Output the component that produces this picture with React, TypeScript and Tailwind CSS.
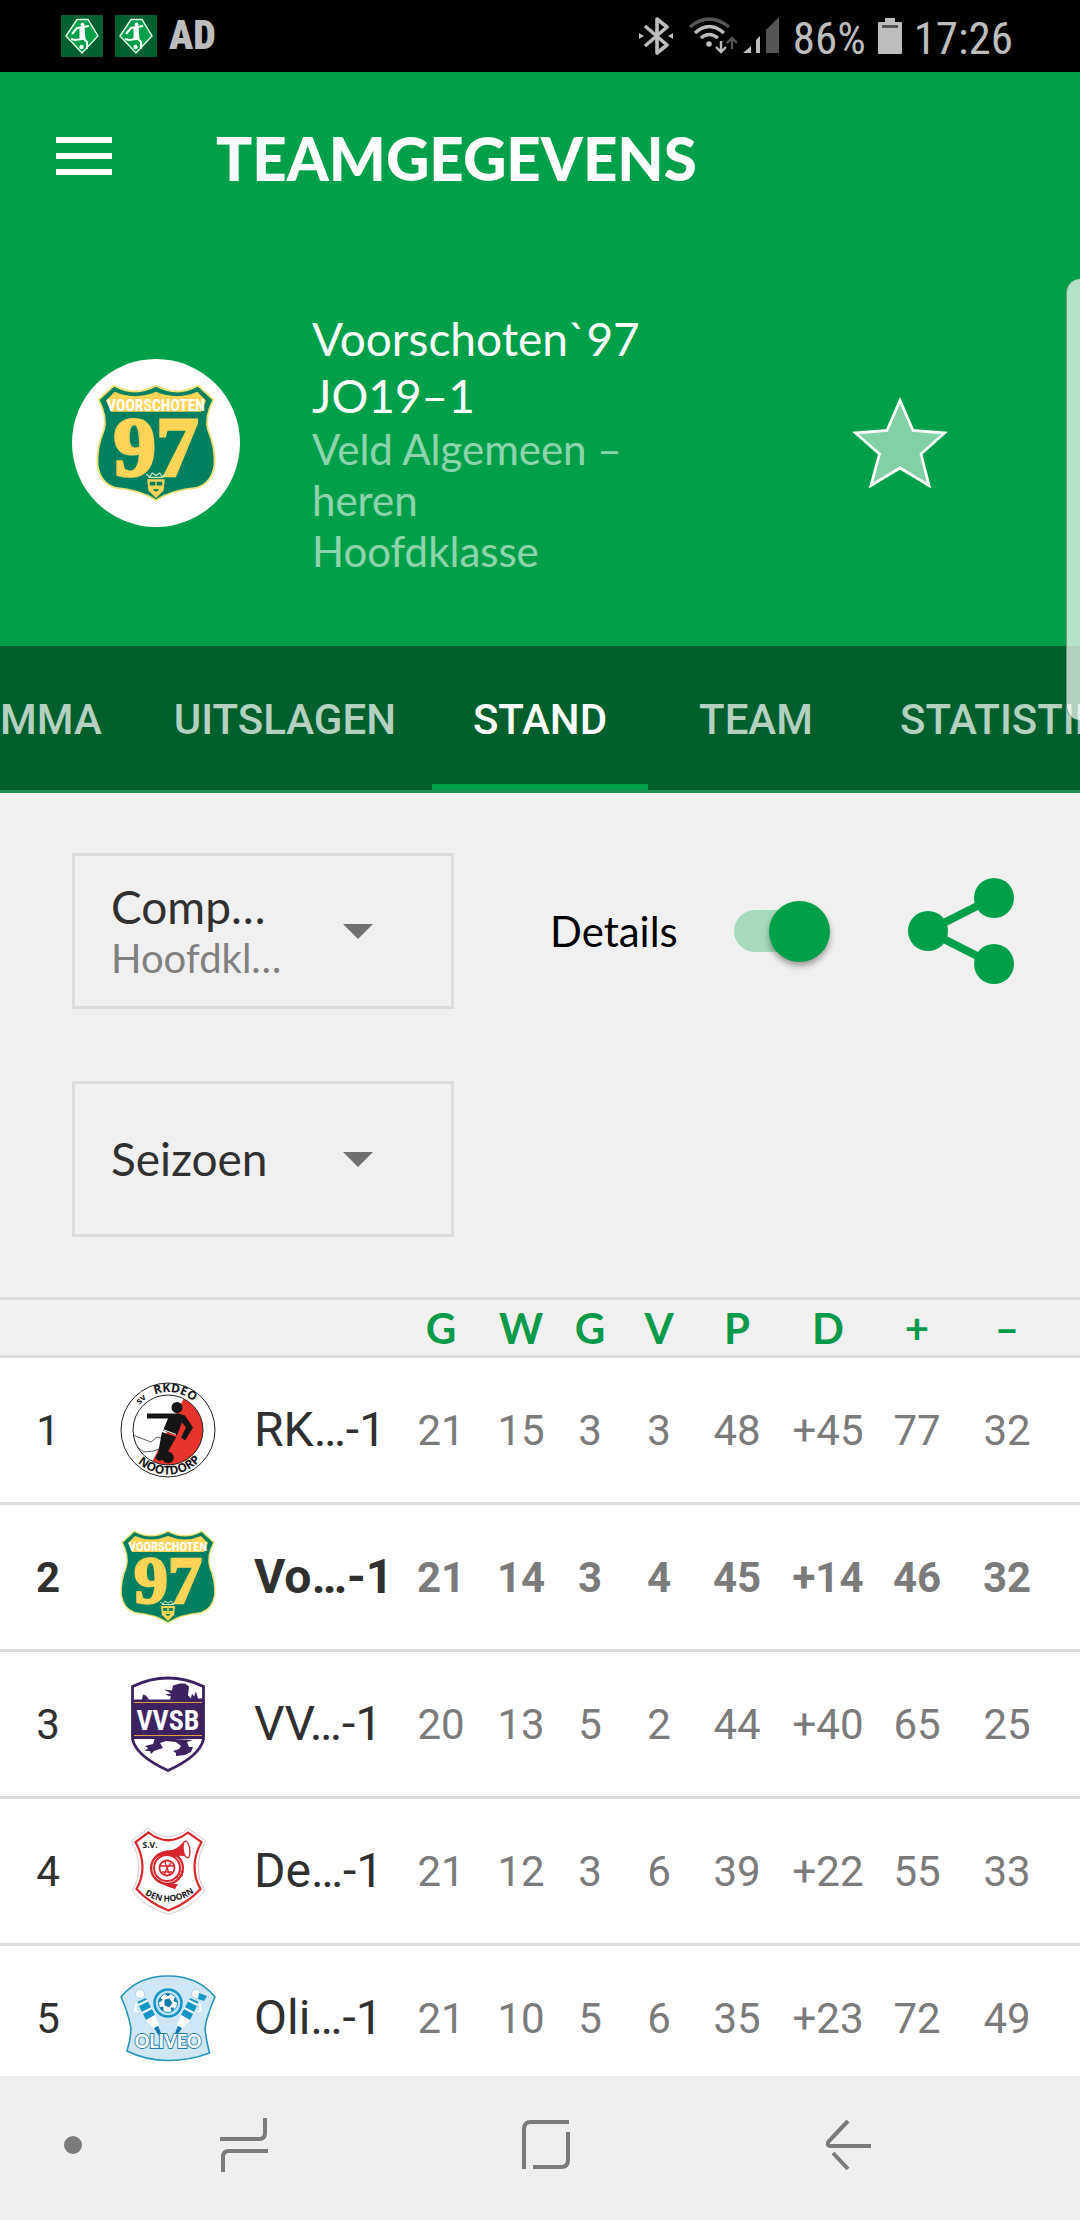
import { useLayoutEffect, useRef, useState } from 'react'
import type { ReactNode } from 'react'
import clsx from 'clsx'

const TABS = ['PROGRAMMA', 'UITSLAGEN', 'STAND', 'TEAM', 'STATISTIEKEN']

const COLUMNS = [
  { label: 'G', title: 'Gespeeld', width: 'w-[74px]' },
  { label: 'W', title: 'Winst', width: 'w-[86px]' },
  { label: 'G', title: 'Gelijk', width: 'w-[52px]' },
  { label: 'V', title: 'Verlies', width: 'w-[86px]' },
  { label: 'P', title: 'Punten', width: 'w-[70px]' },
  { label: 'D', title: 'Doelsaldo', width: 'w-[112px]' },
  { label: '+', title: 'Voor', width: 'w-[66px]' },
  { label: '–', title: 'Tegen', width: 'w-[114px]' },
]

type Row = { pos: number; team: string; crest: ReactNode; stats: string[]; own?: boolean }

const ROWS: Row[] = [
  { pos: 1, team: 'RK…-1', crest: <RkdeoCrest />, stats: ['21', '15', '3', '3', '48', '+45', '77', '32'] },
  { pos: 2, team: 'Vo…-1', crest: <VoorschotenCrest />, stats: ['21', '14', '3', '4', '45', '+14', '46', '32'], own: true },
  { pos: 3, team: 'VV…-1', crest: <VvsbCrest />, stats: ['20', '13', '5', '2', '44', '+40', '65', '25'] },
  { pos: 4, team: 'De…-1', crest: <DenHoornCrest />, stats: ['21', '12', '3', '6', '39', '+22', '55', '33'] },
  { pos: 5, team: 'Oli…-1', crest: <OliveoCrest />, stats: ['21', '10', '5', '6', '35', '+23', '72', '49'] },
]

/* ---------- Club crests, all on a 96 x 96 grid ---------- */

function RkdeoCrest() {
  return (
    <svg viewBox="0 0 96 96" className="size-full" aria-hidden="true">
      <defs>
        <path id="rkdeo-top" d="M10 48a38 38 0 0 1 76 0" />
        <path id="rkdeo-bottom" d="M3.500 48a44.500 44.500 0 0 0 89 0" />
        <clipPath id="rkdeo-disc"><circle cx="48" cy="48" r="35" /></clipPath>
      </defs>
      <circle cx="48" cy="48" r="47" fill="#fff" stroke="#222" strokeWidth="1" />
      <path d="M65 14L32 80l20 10 40-10V20z" fill="#e8332c" clipPath="url(#rkdeo-disc)" />
      <path d="M13 53l10 4 8 3 6-5 7 2 12-2-3 5-11 6-8 3-10 1-8-6z" fill="#fff" stroke="#333" strokeWidth=".8" clipPath="url(#rkdeo-disc)" />
      <circle cx="48" cy="48" r="35" fill="none" stroke="#222" strokeWidth="1" />
      <circle cx="57" cy="25.500" r="5.500" fill="#151515" />
      <path d="M27 31.500h31l7 2 8 12-8 13-4-3 5-10-4-5-5 13-14-5 5-12H27z" fill="#151515" />
      <path d="M42 50l14 5-7 13-4 9-6 2-4-3 3-5z" fill="#151515" />
      <path d="M43 47.500l13 5" stroke="#fff" strokeWidth="1" />
      <circle cx="48" cy="75.500" r="5.800" fill="#151515" />
      <g fill="#151515" fontFamily="'Open Sans', sans-serif" fontWeight="700">
        <text fontSize="9"><textPath href="#rkdeo-top" startOffset="23%">sv</textPath></text>
        <text fontSize="12"><textPath href="#rkdeo-top" startOffset="56%" textAnchor="middle">RKDEO</textPath></text>
        <text fontSize="12"><textPath href="#rkdeo-bottom" startOffset="51%" textAnchor="middle">NOOTDORP</textPath></text>
      </g>
    </svg>
  )
}

function VoorschotenCrest() {
  const shield = 'M14.500 3Q31 12 48 3Q65 12 81.500 3L93 13.500Q86 27 89 38Q95 52 94 66Q92 79 81 83Q60 85 48 93Q36 85 15 83Q4 79 2 66Q1 52 7 38Q10 27 3 13.500Z'
  return (
    <svg viewBox="0 0 96 96" className="size-full" aria-hidden="true">
      <path d={shield} fill="#00805f" stroke="#f0e07a" strokeWidth="3" strokeLinejoin="round" />
      <path d={shield} fill="#00805f" />
      <path d="M15 7Q31 14 48 7Q65 14 81 7L88 14L84 23H12L8 14Z" fill="#ffd457" />
      <text x="48" y="22" textAnchor="middle" fontFamily="'Roboto Condensed', Roboto, sans-serif" fontWeight="700" fontSize="12.500" fill="#fff">VOORSCHOTEN</text>
      <text x="48" y="74" textAnchor="middle" fontFamily="'Liberation Serif', serif" fontWeight="700" fontSize="68" fill="#ffd457" stroke="#ffd457" strokeWidth="2.500">97</text>
      <path d="M41 77h14l-1 9-6 6-6-6z" fill="#ffd457" />
      <path d="M40 73l3 2 2-3 3 2 3-2 2 3 3-2M42 75.500h12" fill="none" stroke="#cfe8c0" strokeWidth="1" />
      <path d="M43.500 79.500h3.500v2h-3.500zM49 79.500h3.500v2H49zM46 85q2 3 4 0" fill="#00805f" stroke="#00805f" strokeWidth="1" />
    </svg>
  )
}

function VvsbCrest() {
  return (
    <svg viewBox="0 0 96 96" className="size-full" aria-hidden="true">
      <path d="M12.500 10.500Q30 2 48 2T83.500 10.500V63Q80 80 48 94.500Q16 80 12.500 63Z" fill="#fff" stroke="#3c2260" strokeWidth="2.800" />
      <path d="M13 23.500h9l1-5 3 1 3 4h21l1-3-6-2 6-1-7-4 8 1 1-5 7-2h5l4 3-1 9 3 3 1-5 2 3 2-5 2 7h6V63H13z" fill="#3c2260" />
      <path d="M35 62l-2 6-8 2 3 2-3 3 5 0 1 3 3-3 9-3-3-5 6-2 10 1 5 4-2 3-6 2 3 2 0 3 9-1 6-3 2-5-4 0-2-5 6-2z" fill="#3c2260" />
      <path d="M14 26.500h68M14 59.500h68" stroke="#e0a03c" strokeWidth="1.200" />
      <text x="48" y="53.500" textAnchor="middle" fontFamily="'Roboto Condensed', Roboto, sans-serif" fontWeight="700" fontSize="28" fill="#fff">VVSB</text>
    </svg>
  )
}

function DenHoornCrest() {
  return (
    <svg viewBox="0 0 96 96" className="size-full" aria-hidden="true">
      <defs><path id="den-hoorn-curve" d="M20 68Q48 90 79 66" /></defs>
      <path d="M28 5.500Q48 22 68.500 5.500L85.500 18Q71 44 84.500 68Q73 84 48.500 91.500Q24 84 12.500 68Q26 44 11.500 18Z" fill="#fff" stroke="#c9b8b8" strokeWidth=".8" />
      <path d="M28.500 9.500Q48 25 68 9.500L81.500 19Q68 44 80.500 66Q68 80 48.500 87.500Q29 80 16.500 66Q29 44 15.500 19Z" fill="#fff" stroke="#d8262c" strokeWidth="2.200" />
      <circle cx="47" cy="45" r="14.500" fill="none" stroke="#d8262c" strokeWidth="5" />
      <circle cx="47" cy="45" r="14.500" fill="none" stroke="#fff" strokeWidth=".8" />
      <circle cx="47" cy="45" r="7.500" fill="#fff" stroke="#d8262c" strokeWidth="1.800" />
      <path d="M41 43h12M42 49h10M45 39l2 6 3 7M51 40l-4 5-3 7" stroke="#d8262c" strokeWidth="1.300" fill="none" />
      <path d="M34 36Q40 27 52 27Q59 25 64 18L68 35Q62 31 55 34L50 33Q41 31 34 36Z" fill="#d8262c" />
      <ellipse cx="66.500" cy="26.500" rx="3.300" ry="8.500" transform="rotate(-8 66.500 26.500)" fill="#fff" stroke="#d8262c" strokeWidth="1.300" />
      <path d="M35 54Q42 62 58 61l-3 5Q42 63 35 54z" fill="#d8262c" />
      <path d="M60 48l4 1M59 51l4 2M57 54l3 2" stroke="#d8262c" strokeWidth="1" />
      <g fill="#151515" fontFamily="'Open Sans', sans-serif" fontWeight="700">
        <text x="22.500" y="24.500" fontSize="8.500">S.V.</text>
        <text fontSize="8.500"><textPath href="#den-hoorn-curve" startOffset="50%" textAnchor="middle">DEN HOORN</textPath></text>
      </g>
    </svg>
  )
}

function OliveoPlayer() {
  return (
    <>
      <circle cx="20" cy="24" r="4.500" fill="#fff" stroke="#8cc8e2" strokeWidth=".6" />
      <path d="M17 32l9-4 9 17-9 5z" fill="#1796c8" />
      <path d="M18.500 35l9-4.500M22 43l10-5" stroke="#fff" strokeWidth="2" />
      <path d="M26 50l9-5 4 10-5 4z" fill="#fff" />
      <path d="M34 58l4-2 5 12-2 1z" fill="#1478ac" />
      <path d="M17 32l-2 8 3 2" fill="none" stroke="#fff" strokeWidth="2" />
    </>
  )
}

function OliveoCrest() {
  return (
    <svg viewBox="0 0 96 96" className="size-full" aria-hidden="true">
      <path d="M1 27Q18 6 48 6T95 27Q87 45 85 58Q86 70 89.500 83Q70 90.500 48 90.500T7 81Q11 68 11 58Q8 42 1 27Z" fill="#cfe6f5" stroke="#2496bd" strokeWidth="1.600" />
      <OliveoPlayer />
      <g transform="matrix(-1 0 0 1 96 0)"><OliveoPlayer /></g>
      <path d="M79 23l8 3-3 5-6-2z" fill="#1796c8" />
      <circle cx="48" cy="33" r="13.500" fill="#bfe2f4" stroke="#1796c8" strokeWidth="2.500" />
      <circle cx="48" cy="33" r="9.500" fill="#fff" stroke="#1796c8" strokeWidth="1" />
      <path d="M45 30l4-1 3 4-3 4-4-2zM46 24h4l-2 2zM55 28l2 4-3-1zM54 38l-2 3-1-3zM43 41l-3-3 3-1zM39 32l1-4 2 2z" fill="#1478ac" stroke="#1478ac" strokeWidth="1" />
      <text x="48" y="78" textAnchor="middle" fontFamily="'Lato', sans-serif" fontWeight="900" fontSize="18" fill="#fff" stroke="#1a7dab" strokeWidth="1.800" paintOrder="stroke">OLIVEO</text>
    </svg>
  )
}

/* ---------- Status bar ---------- */

function KnvbBadge() {
  return (
    <svg viewBox="0 0 42 42" className="size-[42px]" aria-hidden="true">
      <path d="M0 0h42v42H0z" fill="#00602f" />
      <path d="M16 4.500h11L37 21 21 38 5 21z" fill="#009f4a" stroke="#e8fff0" strokeWidth="1.400" />
      <circle cx="21.500" cy="9.500" r="2" fill="#fff" />
      <path d="M28 11l-6 1-6 1-5 6M21 13l1 11-8 1-4-1M22 23l4 4v7" fill="none" stroke="#fff" strokeWidth="2" />
      <path d="M18.500 12h5l1 12h-6z" fill="#fff" />
      <circle cx="20.500" cy="32" r="2.200" fill="#fff" />
    </svg>
  )
}

function StatusBar() {
  return (
    <div className="flex h-[72px] shrink-0 items-center bg-black pr-[67px] pl-[61px] font-['Roboto_Condensed',Roboto,sans-serif] text-[#bdbdbd]">
      <div className="flex items-center gap-3">
        <KnvbBadge />
        <KnvbBadge />
        <span className="text-[40px] leading-none font-black">AD</span>
      </div>
      <div className="ml-auto flex items-center">
        <svg viewBox="0 0 34 38" className="h-[38px] w-[34px]" fill="none" stroke="currentColor" strokeWidth="3.600" aria-hidden="true">
          <path d="M6 9l22 19-10 8V2l10 8L6 29" strokeLinejoin="round" />
          <path d="M0 16l5 3-5 3zM34 16l-5 3 5 3z" fill="currentColor" stroke="none" />
        </svg>
        <svg viewBox="0 0 48 38" className="ml-4 h-[38px] w-12" fill="none" stroke="currentColor" strokeWidth="3.200" aria-hidden="true">
          <path d="M1 10Q20-6 40 10" stroke="#555" />
          <path d="M6 16Q20 3 35 16M12 21Q20 14 29 21" />
          <circle cx="20" cy="27" r="2.800" fill="currentColor" stroke="none" />
          <path d="M32 24v10M27 30l5 5 5-5" strokeWidth="2.400" />
          <path d="M43 32V22M38 26l5-5 5 5" stroke="#555" strokeWidth="2.400" />
        </svg>
        <svg viewBox="0 0 36 38" className="ml-1.5 h-[38px] w-9" fill="currentColor" aria-hidden="true">
          <path d="M0 36l8-7v7zM13 23l4-4v17h-4z" />
          <path d="M23 13L36 0v36H23z" fill="#555" />
        </svg>
        <span className="ml-3.5 pt-1 text-[45px] leading-none">86%</span>
        <svg viewBox="0 0 24 36" className="mx-3 h-9 w-6" fill="currentColor" aria-hidden="true">
          <path d="M7 0h10v4h6q1 0 1 1v30q0 1-1 1H1q-1 0-1-1V5q0-1 1-1h6z" />
          <path d="M4 7h16v3H4z" fill="#555" />
        </svg>
        <span className="pt-1 text-[45px] leading-none">17:26</span>
      </div>
    </div>
  )
}

/* ---------- Header ---------- */

function TeamHeader() {
  return (
    <header className="shrink-0 bg-[#009f4a] text-white">
      <div className="flex h-[168px] items-center pl-14">
        <button aria-label="Menu" className="flex flex-col gap-2.5">
          <span className="h-1.5 w-14 bg-white" />
          <span className="h-1.5 w-14 bg-white" />
          <span className="h-1.5 w-14 bg-white" />
        </button>
        <h1 className="ml-[104px] pt-1 text-[60px] leading-none font-black">TEAMGEGEVENS</h1>
      </div>
      <div className="flex h-[406px] items-center px-[72px] pr-[132px]">
        <div className="flex size-[168px] items-center justify-center rounded-full bg-white">
          <div className="size-[120px]"><VoorschotenCrest /></div>
        </div>
        <div className="ml-[72px] w-[360px]">
          <h2 className="text-[46px] leading-[57px]">Voorschoten`97 JO19–1</h2>
          <p className="text-[42px] leading-[51px] text-white/55">Veld Algemeen – heren</p>
          <p className="text-[42px] leading-[51px] text-white/55">Hoofdklasse</p>
        </div>
        <button aria-label="Favoriet" className="ml-auto">
          <svg viewBox="0 0 96 92" className="h-[92px] w-24" aria-hidden="true">
            <path d="M48 3.500L61 33.500 92.500 36 69 57 77 88.500 48 71 19 88.500 27.500 57 3.500 36 35 33.500Z" fill="#82d1a6" stroke="#fff" strokeWidth="2.800" />
          </svg>
        </button>
      </div>
    </header>
  )
}

function TabBar({ active, onPick }: { active: string; onPick: (t: string) => void }) {
  const bar = useRef<HTMLElement>(null)
  const current = useRef<HTMLButtonElement>(null)

  // keep the active tab in the middle of the bar
  useLayoutEffect(() => {
    const b = bar.current!
    const c = current.current!
    b.scrollLeft = c.offsetLeft + c.offsetWidth / 2 - b.clientWidth / 2
  }, [active])

  return (
    <nav ref={bar} className="relative flex h-[147px] shrink-0 overflow-hidden border-b-[3px] border-[#1f9156] bg-[#00602d]">
      {TABS.map((t) => (
        <button key={t} ref={t === active ? current : undefined} onClick={() => onPick(t)}
          className={clsx('min-w-[216px] shrink-0 border-b-[6px] px-9 pt-2 font-[Roboto,sans-serif] text-[42px] font-medium',
            t === active ? 'border-[#009f4a] text-white' : 'border-transparent text-[#b3d0c0]')}>
          {t}
        </button>
      ))}
    </nav>
  )
}

/* ---------- Filters ---------- */

function Caret() {
  return (
    <svg viewBox="0 0 30 15" className="h-[15px] w-[30px] shrink-0" aria-hidden="true">
      <path d="M0 0h30L15 15z" fill="#707070" />
    </svg>
  )
}

function Filters() {
  const [details, setDetails] = useState(true)
  return (
    <section className="flex shrink-0 flex-col gap-[72px] px-[72px] py-[60px] pr-[66px]">
      <div className="flex items-center">
        <label className="flex h-[156px] w-[382px] items-center border-[3px] border-[#dcdcdc] pl-9">
          <span className="flex w-[232px] flex-col">
            <span className="text-[46px] leading-[54px] text-[#303030]">Comp…</span>
            <select className="appearance-none bg-transparent text-[40px] leading-[48px] text-[#808080]">
              <option>Hoofdkl…</option>
            </select>
          </span>
          <Caret />
        </label>
        <label className="ml-24 flex items-center">
          <span className="w-[184px] text-[42px] leading-none text-black">Details</span>
          <span className="relative flex h-[62px] w-24 items-center">
            <input type="checkbox" role="switch" checked={details} onChange={(e) => setDetails(e.target.checked)} className="peer sr-only" />
            <span className="h-[42px] w-20 rounded-full bg-[#a6dabd]" />
            <span className="absolute left-0 size-[61px] rounded-full bg-[#009f4a] shadow-[0_4px_6px_rgba(0,0,0,0.35)] peer-checked:left-[35px]" />
          </span>
        </label>
        <button aria-label="Delen" className="ml-auto">
          <svg viewBox="0 0 106 106" className="size-[106px]" fill="#009f4a" aria-hidden="true">
            <path d="M85 20L20 53l65 33" fill="none" stroke="#009f4a" strokeWidth="8" />
            <circle cx="86" cy="20" r="20" />
            <circle cx="20" cy="53" r="20" />
            <circle cx="86" cy="86" r="20" />
          </svg>
        </button>
      </div>
      <label className="flex h-[156px] w-[382px] items-center border-[3px] border-[#dcdcdc] pl-9">
        <select aria-label="Seizoen" className="w-[232px] appearance-none bg-transparent text-[46px] leading-[54px] text-[#303030]">
          <option>Seizoen</option>
        </select>
        <Caret />
      </label>
    </section>
  )
}

/* ---------- Standings ---------- */

function Standings() {
  return (
    <table className="w-full table-fixed border-collapse">
      <colgroup>
        <col className="w-24" />
        <col className="w-[144px]" />
        <col />
        {COLUMNS.map((c) => <col key={c.title} className={c.width} />)}
        <col className="w-4" />
      </colgroup>
      <thead>
        <tr className="h-[58px] border-y-[3px] border-[#dcdcdc] text-[42px] leading-none text-[#0a9a4c]">
          <td colSpan={3} />
          {COLUMNS.map((c) => <th key={c.title} title={c.title} scope="col" className="p-0 font-bold">{c.label}</th>)}
          <td />
        </tr>
      </thead>
      <tbody className="bg-white font-[Roboto,sans-serif]">
        {ROWS.map((r) => (
          <tr key={r.pos} className={clsx('h-[147px] border-b-[3px] border-[#dcdcdc] text-center text-[42px]', r.own && 'font-bold')}>
            <td className="p-0 text-[#303030]">{r.pos}</td>
            <td className="p-0"><div className="mx-auto size-24">{r.crest}</div></td>
            <td className="p-0 pl-3.5 text-left text-[48px] whitespace-nowrap text-[#303030]">{r.team}</td>
            {r.stats.map((s, i) => <td key={COLUMNS[i].title} className="p-0 text-[#7b7b7b]">{s}</td>)}
            <td />
          </tr>
        ))}
      </tbody>
    </table>
  )
}

function NavBar() {
  return (
    <nav className="flex h-36 shrink-0 items-center bg-[#efefef] pr-[208px] pb-1.5 pl-16 text-[#7b7b7b]">
      <button aria-label="Balk verbergen" className="mr-[138px] size-[18px] rounded-full bg-current" />
      <div className="flex flex-1 items-center justify-between">
        <button aria-label="Recent">
          <svg viewBox="0 0 48 54" className="h-[54px] w-12" fill="none" stroke="currentColor" strokeWidth="4" aria-hidden="true">
            <path d="M0 21h39q6 0 6-6V0M48 33H9q-6 0-6 6v15" />
          </svg>
        </button>
        <button aria-label="Home">
          <svg viewBox="0 0 50 52" className="h-[52px] w-[50px]" fill="none" stroke="currentColor" strokeWidth="4" aria-hidden="true">
            <path d="M3 50V10q0-7 7-7h38M47 13v28q0 7-7 7H12" />
          </svg>
        </button>
        <button aria-label="Terug">
          <svg viewBox="0 0 48 52" className="h-[52px] w-12" fill="none" stroke="currentColor" strokeWidth="4" aria-hidden="true">
            <path d="M24 2L5 22q-3 4 1 5h41M9 34l15 16" />
          </svg>
        </button>
      </div>
    </nav>
  )
}

export default function App() {
  const [tab, setTab] = useState('STAND')
  return (
    <div className="relative flex h-screen flex-col overflow-hidden bg-[#f0f0f0] font-[Lato,sans-serif]">
      <StatusBar />
      <TeamHeader />
      <TabBar active={tab} onPick={setTab} />
      <main className="min-h-0 flex-1 overflow-hidden">
        <Filters />
        <Standings />
      </main>
      <NavBar />
      {/* Edge panel handle, floats over the app */}
      <div className="absolute top-[279px] right-0 h-[441px] w-3.5 rounded-l-2xl border-l border-[#6b9a80] bg-white/70" />
    </div>
  )
}
